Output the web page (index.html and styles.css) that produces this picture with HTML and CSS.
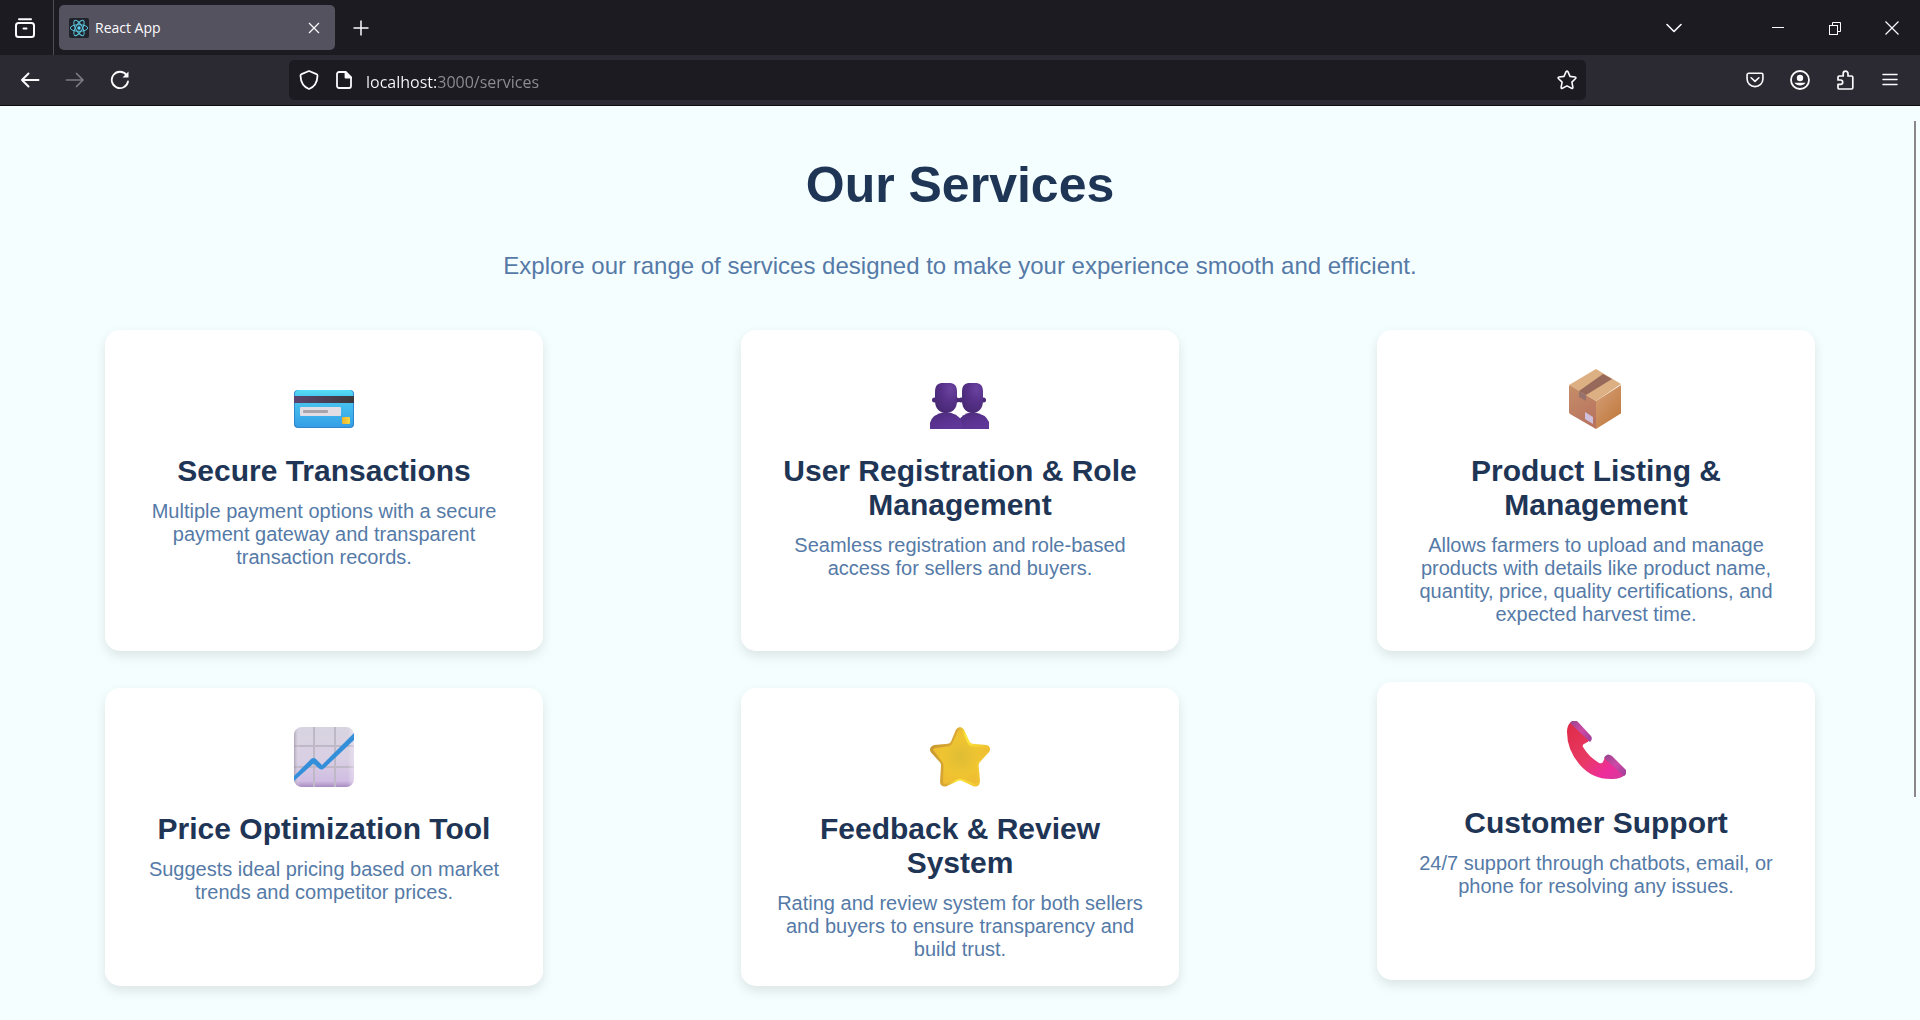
FILE: index.html
```html
<!DOCTYPE html>
<html lang="en">
<head>
<meta charset="utf-8">
<meta name="viewport" content="width=device-width, initial-scale=1">
<title>React App</title>
<link rel="stylesheet" href="styles.css">
</head>
<body>
<div class="browser">
  <div class="tab-strip">
    <button class="icon-button view-button" aria-label="Firefox View">
      <svg width="20" height="20" viewBox="0 0 20 20" fill="none" stroke="currentColor" stroke-width="2" stroke-linecap="round"><path d="M4 1.2h12"/><rect x="1" y="5" width="18" height="14" rx="2.5"/><path d="M8.5 10.5h3"/></svg>
    </button>
    <div class="tab">
      <svg width="20" height="20" viewBox="0 0 20 20"><rect width="20" height="20" rx="2" fill="#20232a"/><g fill="none" stroke="#5cc3dd" stroke-width="1"><ellipse cx="10" cy="10" rx="8.7" ry="3.3"/><ellipse cx="10" cy="10" rx="8.7" ry="3.3" transform="rotate(60 10 10)"/><ellipse cx="10" cy="10" rx="8.7" ry="3.3" transform="rotate(120 10 10)"/></g><circle cx="10" cy="10" r="1.7" fill="#61dafb"/></svg>
      <span class="tab-title">React App</span>
      <button class="icon-button" aria-label="Close tab">
        <svg width="12" height="12" viewBox="0 0 12 12" fill="none" stroke="currentColor" stroke-width="1.2"><path d="M1 1l10 10M11 1L1 11"/></svg>
      </button>
    </div>
    <button class="icon-button new-tab" aria-label="New tab">
      <svg width="16" height="16" viewBox="0 0 16 16" fill="none" stroke="currentColor" stroke-width="1.5"><path d="M8 0.5v15M0.5 8h15"/></svg>
    </button>
    <div class="window-controls">
      <button class="icon-button list-tabs" aria-label="List all tabs">
        <svg width="16" height="10" viewBox="0 0 16 10" fill="none" stroke="currentColor" stroke-width="1.6" stroke-linecap="round" stroke-linejoin="round"><path d="M1 1.5l7 7 7-7"/></svg>
      </button>
      <button class="icon-button" aria-label="Minimize">
        <svg width="14" height="14" viewBox="0 0 14 14" fill="none" stroke="currentColor"><path d="M1 6.5h12"/></svg>
      </button>
      <button class="icon-button" aria-label="Restore">
        <svg width="14" height="14" viewBox="0 0 14 14" fill="none" stroke="currentColor"><rect x="1.500" y="4.500" width="8" height="9"/><path d="M4.500 4.500v-3h8v9h-3"/></svg>
      </button>
      <button class="icon-button" aria-label="Close">
        <svg width="14" height="14" viewBox="0 0 14 14" fill="none" stroke="currentColor" stroke-width="1.2"><path d="M.5.5l13 13M13.500.5l-13 13"/></svg>
      </button>
    </div>
  </div>

  <div class="toolbar">
    <div class="nav-buttons">
      <button class="icon-button" aria-label="Back">
        <svg width="20" height="18" viewBox="0 0 20 18" fill="none" stroke="currentColor" stroke-width="2" stroke-linecap="round" stroke-linejoin="round"><path d="M18.500 9H2M8.500 2.500L2 9l6.500 6.500"/></svg>
      </button>
      <button class="icon-button" aria-label="Forward" disabled>
        <svg width="20" height="18" viewBox="0 0 20 18" fill="none" stroke="currentColor" stroke-width="1.700" stroke-linecap="round" stroke-linejoin="round"><path d="M1.500 9H18M11.500 2.500L18 9l-6.500 6.500"/></svg>
      </button>
      <button class="icon-button" aria-label="Reload">
        <svg width="20" height="20" viewBox="0 0 20 20" fill="none" stroke="currentColor" stroke-width="1.800" stroke-linecap="round"><path d="M16.500 5A8.200 8.200 0 1 0 18 11.500"/><path d="M18.500 1.500v6h-6z" fill="currentColor" stroke="none"/></svg>
      </button>
    </div>
    <div class="url-bar">
      <svg width="20" height="20" viewBox="0 0 20 20" fill="none" stroke="currentColor" stroke-width="1.800" stroke-linejoin="round"><path d="M10 1l7.500 3.200c.8.300 1 .8 1 1.500C18.300 12 15 17 10 19 5 17 1.700 12 1.500 5.700c0-.7.200-1.200 1-1.500z"/></svg>
      <svg width="16" height="18" viewBox="0 0 16 18" fill="none" stroke="currentColor" stroke-width="1.800" stroke-linejoin="round"><path d="M3 1h6.500L15 6.500V15a2 2 0 0 1-2 2H3a2 2 0 0 1-2-2V3a2 2 0 0 1 2-2z"/><path d="M9.500 1v5.500H15z" fill="currentColor"/></svg>
      <input class="url-input" type="text" value="localhost:3000/services" aria-label="Address">
      <button class="icon-button" aria-label="Bookmark this page">
        <svg width="20" height="20" viewBox="0 0 20 20" fill="none" stroke="currentColor" stroke-width="1.600" stroke-linejoin="round"><path d="M9.100 1.700q.9-1.300 1.800 0l2.100 4.700 5 .6q1.500.4.600 1.500l-3.700 3.600 1 5.200q0 1.500-1.300 1L10 15.900l-4.600 2.400q-1.300.5-1.300-1l1-5.200L1.400 8.500Q.5 7.400 2 7l5-.6z"/></svg>
      </button>
    </div>
    <div class="tool-buttons">
      <button class="icon-button" aria-label="Save to Pocket">
        <svg width="18" height="18" viewBox="0 0 20 18" fill="none" stroke="currentColor" stroke-width="1.800" stroke-linecap="round" stroke-linejoin="round"><path d="M3 1.500h14a1.800 1.800 0 0 1 1.800 1.800V8a8.800 8.300 0 0 1-17.600 0V3.300A1.800 1.800 0 0 1 3 1.500z"/><path d="M5.700 6.500L10 10.500l4.300-4"/></svg>
      </button>
      <button class="icon-button" aria-label="Account">
        <svg width="20" height="20" viewBox="0 0 20 20"><circle cx="10" cy="10" r="9" fill="none" stroke="currentColor" stroke-width="1.800"/><circle cx="10" cy="8" r="3.200" fill="currentColor"/><path d="M4.500 12.800h11a6.500 6 0 0 1-11 0z" fill="currentColor"/></svg>
      </button>
      <button class="icon-button" aria-label="Extensions">
        <svg width="20" height="20" viewBox="0 0 20 20" fill="none" stroke="currentColor" stroke-width="1.700" stroke-linejoin="round"><path d="M3 19h12.500a1.300 1.300 0 0 0 1.300-1.300V7.300A1.300 1.300 0 0 0 15.500 6H12V3.500a2.400 2.400 0 0 0-4.800 0V6H3.300A1.300 1.300 0 0 0 2 7.300V10h2.500a2.200 2.200 0 0 1 0 4.400H2v3.300A1.300 1.300 0 0 0 3 19z"/></svg>
      </button>
      <button class="icon-button" aria-label="Open application menu">
        <svg width="16" height="14" viewBox="0 0 16 14" fill="none" stroke="currentColor" stroke-width="1.500" stroke-linecap="round"><path d="M1 1.500h14M1 6.500h14M1 11.500h14"/></svg>
      </button>
    </div>
  </div>

  <main class="page">
    <h1 class="page-title">Our Services</h1>
    <p class="page-lead">Explore our range of services designed to make your experience smooth and efficient.</p>

    <div class="services">
      <section class="card">
        <svg class="card-icon" viewBox="0 0 60 60" aria-hidden="true">
          <defs>
            <linearGradient id="payBody" x2="0" y2="1"><stop stop-color="#55dcf5"/><stop offset=".15" stop-color="#4ccbf0"/><stop offset="1" stop-color="#359fe6"/></linearGradient>
            <linearGradient id="payStripe"><stop stop-color="#5c4470"/><stop offset="1" stop-color="#3c3a3c"/></linearGradient>
            <linearGradient id="payChip"><stop stop-color="#eab52e"/><stop offset="1" stop-color="#f8d840"/></linearGradient>
          </defs>
          <rect y="21" width="60" height="38" rx="4" fill="#2f86cc"/>
          <rect x="1" y="21" width="58" height="37" rx="4" fill="url(#payBody)"/>
          <rect y="27" width="60" height="7" fill="url(#payStripe)"/>
          <rect x="6" y="38" width="41" height="9" rx="1" fill="#e2dde4"/>
          <rect x="9" y="41" width="25" height="3" rx="1" fill="#a9a3ab"/>
          <rect x="48" y="48" width="8" height="7" rx="1" fill="url(#payChip)"/>
        </svg>
        <h2 class="card-title">Secure Transactions</h2>
        <p class="card-text">Multiple payment options with a secure payment gateway and transparent transaction records.</p>
      </section>

      <section class="card">
        <svg class="card-icon" viewBox="0 0 60 60" aria-hidden="true">
          <defs>
            <radialGradient id="userHead" cx=".7" cy=".2" r=".85"><stop stop-color="#6a43a0"/><stop offset=".5" stop-color="#573189"/><stop offset="1" stop-color="#482974"/></radialGradient>
            <linearGradient id="userBody" x2=".6" y2="1"><stop stop-color="#4a2a76"/><stop offset=".6" stop-color="#5a3391"/><stop offset="1" stop-color="#5f3799"/></linearGradient>
          </defs>
          <path d="M29 60v-8q2-7 14-9 13 2 16 10v7z" fill="url(#userBody)"/>
          <circle cx="31" cy="31" r="2.500" fill="#4a2a76"/><circle cx="53.500" cy="31" r="2.500" fill="#4a2a76"/>
          <path d="M32 23C32 16 35 14 40 14h5C50 14 53 16 53 23v9C53 40 48 44 42.500 44S32 40 32 32z" fill="url(#userHead)"/>
          <path d="M0 60v-6q2-9 15-11 14 1 17 10v7z" fill="url(#userBody)"/>
          <circle cx="4.500" cy="31" r="2.500" fill="#4a2a76"/><circle cx="27" cy="31" r="2.500" fill="#4a2a76"/>
          <path d="M5 23C5 16 8 14 13 14h6C24 14 27 16 27 23v9C27 40 22 44 16 44S5 40 5 32z" fill="url(#userHead)"/>
        </svg>
        <h2 class="card-title">User Registration &amp; Role Management</h2>
        <p class="card-text">Seamless registration and role-based access for sellers and buyers.</p>
      </section>

      <section class="card">
        <svg class="card-icon" viewBox="0 0 60 60" aria-hidden="true">
          <defs>
            <linearGradient id="boxLeft" x2=".4" y2="1"><stop stop-color="#c68f68"/><stop offset="1" stop-color="#b87460"/></linearGradient>
            <linearGradient id="boxRight" x2=".7" y2="1"><stop stop-color="#d6a07a"/><stop offset="1" stop-color="#c07a3e"/></linearGradient>
          </defs>
          <path d="M4 16l26 16v28L4 45q-1-1-1-2V17z" fill="url(#boxLeft)"/>
          <path d="M30 32l25-16v28q0 1-1 1L30 60z" fill="url(#boxRight)"/>
          <path d="M3 16L30 0l25 15-25 17z" fill="#dcb082"/>
          <path d="M37 5l9 5-26 16-7-4z" fill="#96695a"/>
          <path d="M13 22l7 4v6l-7-4z" fill="#97726b"/>
          <path d="M19 43l8 5v7l-8-5z" fill="#cfc0dc"/>
        </svg>
        <h2 class="card-title">Product Listing &amp; Management</h2>
        <p class="card-text">Allows farmers to upload and manage products with details like product name, quantity, price, quality certifications, and expected harvest time.</p>
      </section>

      <section class="card">
        <svg class="card-icon" viewBox="0 0 60 60" aria-hidden="true">
          <defs>
            <linearGradient id="chartBody" x2="0" y2="1"><stop stop-color="#d8d4e0"/><stop offset=".55" stop-color="#d9cfe4"/><stop offset=".9" stop-color="#d0bde2"/><stop offset="1" stop-color="#a88abf"/></linearGradient>
            <linearGradient id="chartEdge"><stop stop-color="#8f8799" stop-opacity=".6"/><stop offset=".1" stop-color="#fff" stop-opacity="0"/><stop offset=".9" stop-color="#fff" stop-opacity="0"/><stop offset="1" stop-color="#f0e8f8" stop-opacity=".5"/></linearGradient>
          </defs>
          <rect width="60" height="60" rx="8" fill="url(#chartBody)"/>
          <path d="M20 0v60M41 0v60M0 19h60M0 40h60" stroke="#bfb8c7" stroke-width="2"/>
          <rect width="60" height="60" rx="8" fill="url(#chartEdge)"/>
          <path d="M0 49L17 32q2.500-2 5 0l6 6L60 6v7L30 41.500q-2.500 2-5 0l-5.500-5L0 54z" fill="#348fda"/>
        </svg>
        <h2 class="card-title">Price Optimization Tool</h2>
        <p class="card-text">Suggests ideal pricing based on market trends and competitor prices.</p>
      </section>

      <section class="card">
        <svg class="card-icon" viewBox="0 0 60 60" aria-hidden="true">
          <defs>
            <radialGradient id="starFill" cx=".5" cy=".5" r=".55"><stop stop-color="#dfbd35"/><stop offset=".6" stop-color="#efc431"/><stop offset="1" stop-color="#eebc33"/></radialGradient>
            <linearGradient id="starEdge" x2="1" y2=".2"><stop stop-color="#c4962f"/><stop offset=".45" stop-color="#dba935"/><stop offset=".6" stop-color="#fbe63a"/><stop offset="1" stop-color="#f0c030"/></linearGradient>
          </defs>
          <path d="M26 2.500q4-5 8 0l5.500 12q1 2 3 2.200l14 1.300q5 1.500 3 6.500L50 35q-1.500 1.500-1.300 4l1.300 15q0 6-6 5.500L32 54q-2-1-4 0l-12 5.500q-6 .5-6-5L11 39q.2-2.500-1.300-4L1 25.500q-3-5 3-7.500l14-1.300q2-.2 3-2.200z" fill="url(#starEdge)"/>
          <path d="M28 4q2-3 4 0l6 13q1 2 3 2.200L56 21q3 .5 1 3l-9 10q-1.500 1.500-1.300 4L48 54q0 3-3 2.500L32 52q-2-1-4 0l-12 5q-3 .5-3-2.500L13.500 39q.2-2.500-1.300-4L4 24q-2-2 1-3l14-1.800q2-.2 3-2.200z" fill="url(#starFill)"/>
        </svg>
        <h2 class="card-title">Feedback &amp; Review System</h2>
        <p class="card-text">Rating and review system for both sellers and buyers to ensure transparency and build trust.</p>
      </section>

      <section class="card card-raised">
        <svg class="card-icon" viewBox="0 0 60 60" aria-hidden="true">
          <defs>
            <linearGradient id="phoneBody" x2="1" y2="1"><stop stop-color="#e02a45"/><stop offset=".5" stop-color="#e83a66"/><stop offset=".78" stop-color="#ee2c9c"/><stop offset="1" stop-color="#cf3b9a"/></linearGradient>
            <linearGradient id="phonePad" x2="1" y2="1"><stop stop-color="#96468c"/><stop offset=".5" stop-color="#cd4aa6"/><stop offset="1" stop-color="#9a3f98"/></linearGradient>
          </defs>
          <path d="M5 1q-4 3-4 10 0 18 13 33t33 14q7 0 12-4L40 35q-2 3-3 6-1 2-4 1Q22 35 17 26q-1-2 1-3 4-2 6-4z" fill="url(#phoneBody)"/>
          <path d="M4 2q4-5 8-1l13 14q2 3-1 6z" fill="url(#phonePad)"/>
          <path d="M38 37q3-6 8-2l14 14q2 3-2 6z" fill="url(#phonePad)"/>
        </svg>
        <h2 class="card-title">Customer Support</h2>
        <p class="card-text">24/7 support through chatbots, email, or phone for resolving any issues.</p>
      </section>
    </div>
    <div class="scroll-thumb"></div>
  </main>
</div>
</body>
</html>
```
FILE: styles.css
```css
* {
  box-sizing: border-box;
}

body {
  margin: 0;
  font-family: "Liberation Sans", Arial, sans-serif;
}

.browser {
  display: flex;
  flex-direction: column;
  height: 100vh;
  color: #fbfbfe;
}

.icon-button {
  display: flex;
  align-items: center;
  justify-content: center;
  padding: 0;
  border: 0;
  background: none;
  color: inherit;
}

.icon-button:disabled {
  color: #7c7b82;
}

/* Tab strip */
.tab-strip {
  display: flex;
  align-items: center;
  height: 55px;
  flex-shrink: 0;
  background: #1c1b22;
}

.view-button {
  width: 54px;
  height: 100%;
  padding-right: 4px;
  border-right: 1px solid #4d4c55;
}

.tab {
  display: flex;
  align-items: center;
  gap: 6px;
  width: 276px;
  height: 45px;
  margin-left: 5px;
  padding: 0 15px 0 10px;
  border-radius: 5px;
  background: #55525f;
}

.tab-title {
  flex: 1;
  font: 14px/20px "Open Sans", "Noto Sans", sans-serif;
}

.new-tab {
  margin-left: 18px;
}

.window-controls {
  display: flex;
  align-items: center;
  gap: 43px;
  margin-left: auto;
  padding-right: 21px;
}

.list-tabs {
  margin-right: 46px;
}

/* Toolbar */
.toolbar {
  display: flex;
  align-items: center;
  height: 51px;
  flex-shrink: 0;
  border-bottom: 1px solid #0c0c0d;
  background: #2b2a33;
}

.nav-buttons {
  display: flex;
  gap: 25px;
  width: 289px;
  padding-left: 20px;
}

.url-bar {
  display: flex;
  align-items: center;
  gap: 14px;
  flex: 1;
  height: 40px;
  padding: 0 9px 0 10px;
  border-radius: 5px;
  background: #1c1b22;
}

.url-bar svg {
  flex-shrink: 0;
}

.url-bar > svg + svg {
  margin-left: 3px;
}

.url-input {
  flex: 1;
  height: 28px;
  padding: 3px 0 0;
  border: 0;
  outline: 0;
  background: linear-gradient(to right, #fbfbfe 70px, #8f8e96 70px);
  -webkit-background-clip: text;
  background-clip: text;
  color: transparent;
  font: 16px/24px "Open Sans", "Noto Sans", sans-serif;
}

.tool-buttons {
  display: flex;
  justify-content: flex-end;
  align-items: center;
  gap: 26px;
  width: 334px;
  padding-right: 22px;
}

/* Page */
.page {
  position: relative;
  flex: 1;
  min-height: 0;
  overflow: hidden;
  padding: 49px 6px 0;
  background: #f5feff;
  text-align: center;
}

.page-title {
  margin: 0;
  color: #1f3556;
  font-size: 50px;
  line-height: 60px;
}

.page-lead {
  margin: 37px 0 50px;
  color: #557aa7;
  font-size: 24px;
  line-height: 28px;
}

.services {
  display: grid;
  grid-template-columns: repeat(3, 1fr);
  gap: 37px 0;
  justify-items: center;
}

.card {
  width: 100%;
  max-width: 438px;
  padding: 39px 27px 25px;
  border-radius: 15px;
  background: #fff;
  box-shadow: 0 5px 12px rgba(0, 0, 0, 0.1);
}

.card-raised {
  transform: translateY(-6px);
}

.card-icon {
  display: block;
  width: 60px;
  height: 60px;
  margin: 0 auto 25px;
}

.card-title {
  margin: 0 0 12px;
  color: #1f3556;
  font-size: 30px;
  line-height: 34px;
}

.card-text {
  margin: 0;
  color: #557aa7;
  font-size: 20px;
  line-height: 23px;
}

.scroll-thumb {
  position: absolute;
  top: 15px;
  right: 4px;
  width: 2px;
  height: 74%;
  background: #8b8788;
}
```
